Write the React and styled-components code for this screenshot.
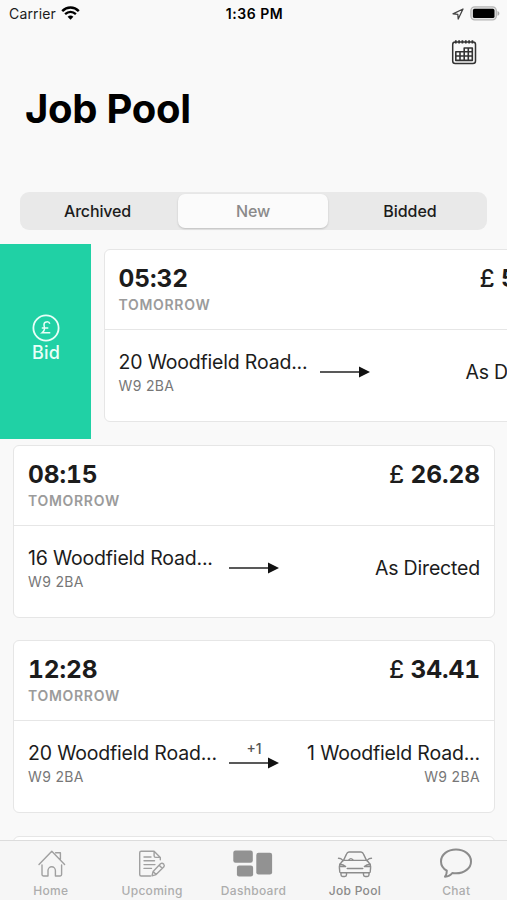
import React from "react";
import styled, { createGlobalStyle } from "styled-components";

const GlobalStyle = createGlobalStyle`
  * {
    box-sizing: border-box;
  }

  body {
    margin: 0;
    background: #f9f9f9;
    font-family: Inter, "Liberation Sans", sans-serif;
    color: #1c1c1c;
  }
`;

const Screen = styled.div`
  display: flex;
  flex-direction: column;
  width: 507px;
  height: 900px;
  overflow: hidden;
  background: #f9f9f9;
`;

const StatusBar = styled.div`
  display: grid;
  grid-template-columns: 1fr auto 1fr;
  align-items: center;
  height: 27px;
  padding: 0 7px 0 9px;
  flex-shrink: 0;
`;

const Carrier = styled.div`
  display: flex;
  align-items: center;
  gap: 5px;
  margin-top: -1px;
  font-size: 14px;
  line-height: 17px;
  letter-spacing: 0.15px;
`;

const Clock = styled.div`
  font-size: 14px;
  line-height: 17px;
  font-weight: 600;
  letter-spacing: 0.55px;
  color: #000;
`;

const StatusIcons = styled.div`
  display: flex;
  align-items: center;
  justify-content: flex-end;
  gap: 6px;
`;

const Header = styled.header`
  display: flex;
  flex-direction: column;
  height: 165px;
  padding: 12px 30px 0 25px;
  flex-shrink: 0;
`;

const CalendarButton = styled.button`
  align-self: flex-end;
  width: 26px;
  height: 26px;
  padding: 0;
  border: 0;
  background: none;

  svg {
    display: block;
  }
`;

const Title = styled.h1`
  margin: 20px 0 0;
  font-size: 40px;
  line-height: 48px;
  font-weight: 700;
  letter-spacing: -0.3px;
  color: #000;
`;

const Segments = styled.div`
  display: grid;
  grid-template-columns: 157px 152px 1fr;
  height: 38px;
  margin: 0 20px 14px;
  border-radius: 9px;
  background: #e9e9e9;
  flex-shrink: 0;
`;

const Segment = styled.button`
  margin: ${({ $active }) => ($active ? "2px 1px" : "0")};
  padding: 0;
  border: 0;
  border-radius: 7px;
  font: 500 16px/34px Inter, sans-serif;
  letter-spacing: -0.15px;
  color: ${({ $active }) => ($active ? "#8a8a8a" : "#1c1c1c")};
  background: ${({ $active }) => ($active ? "#fbfbfb" : "none")};
  box-shadow: ${({ $active }) =>
    $active ? "0 1px 2px rgba(0, 0, 0, 0.18)" : "none"};

  &:first-child {
    padding-right: 2px;
  }

  &:last-child {
    padding-left: 4px;
    letter-spacing: -0.05px;
  }
`;

const JobList = styled.main`
  flex: 1;
  min-height: 0;
  overflow: hidden;
`;

const JobRow = styled.div`
  display: flex;
  height: 195.5px;
`;

const BidAction = styled.button`
  display: flex;
  flex-direction: column;
  align-items: center;
  justify-content: center;
  width: 91px;
  height: 195px;
  margin-right: -0.5px;
  padding: 0 0 5px 1px;
  border: 0;
  flex-shrink: 0;
  font: 500 18px/22px Inter, sans-serif;
  letter-spacing: 0.2px;
  color: #e9fff8;
  background: #20d1a5;
`;

const Card = styled.article`
  width: 482px;
  height: 173px;
  margin: 5px 13px 0;
  flex-shrink: 0;
  border: 1px solid #e6e6e6;
  border-radius: 6px;
  background: #fff;
`;

const CardTop = styled.div`
  display: flex;
  justify-content: space-between;
  height: 80px;
  padding: 13px 14px 0;
  border-bottom: 1px solid #e6e6e6;
`;

const Time = styled.div`
  font-size: 24.5px;
  line-height: 30px;
  font-weight: 650;
  letter-spacing: -0.1px;
  font-variant-numeric: tabular-nums;
`;

const Day = styled.div`
  margin-top: 3px;
  font-size: 14px;
  line-height: 18px;
  font-weight: 600;
  letter-spacing: 0.7px;
  color: #9b9b9b;
`;

const Currency = styled.span`
  font-weight: 500;
`;

const Route = styled.div`
  display: grid;
  grid-template-columns: 1fr 50px 1fr;
  height: 86px;
  padding: 0 14px;
`;

const Stop = styled.div`
  padding-top: ${({ $single }) => ($single ? "30px" : "20px")};
  text-align: ${({ $end }) => ($end ? "right" : "left")};
`;

const Address = styled.div`
  font-size: 19.5px;
  line-height: 25px;
  font-weight: 440;
  letter-spacing: -0.18px;
  white-space: nowrap;
`;

const Postcode = styled.div`
  font-size: 14px;
  line-height: 22px;
  letter-spacing: 0.35px;
  color: #777;
`;

const Leg = styled.div`
  padding-top: 18px;
  text-align: center;

  svg {
    display: block;
  }
`;

const ExtraStops = styled.div`
  height: 18px;
  font-size: 14px;
  line-height: 20px;
  font-weight: 500;
  color: #555;
`;

const TabBar = styled.nav`
  display: grid;
  grid-template-columns: repeat(5, 1fr);
  height: 60px;
  border-top: 1px solid #dcdcdc;
  background: #f6f6f6;
  flex-shrink: 0;
`;

const Tab = styled.button`
  display: flex;
  flex-direction: column;
  align-items: center;
  padding: 5px 0 0;
  border: 0;
  background: none;
  font: 500 12px/16px Inter, sans-serif;
  letter-spacing: 0.3px;
  color: ${({ $active }) => ($active ? "#8a8a8a" : "#adadad")};

  svg {
    display: block;
    margin-bottom: 3px;
    fill: none;
    stroke: ${({ $dark }) => ($dark ? "#8c8c8c" : "#a0a0a0")};
    stroke-width: 1.4;
    stroke-linecap: round;
    stroke-linejoin: round;
  }
`;

const WifiIcon = () => (
  <svg width="19" height="14" viewBox="0 0 19 14" fill="none" stroke="#000">
    <path d="M1.2 5.1C6 .4 13 .4 17.8 5.1" strokeWidth="2.5" />
    <path d="M4.1 8.2c3.2-3 7.6-3 10.8 0" strokeWidth="2.3" />
    <path d="M6.6 10.8c1.8-1.6 4-1.6 5.8 0L9.5 13.7Z" fill="#000" stroke="none" />
  </svg>
);

const LocationIcon = () => (
  <svg width="12" height="12" viewBox="0 0 12 12" fill="none" stroke="#444">
    <path d="M11 1 1 5.8l4.8.5.4 4.7Z" strokeWidth="1.3" strokeLinejoin="round" />
  </svg>
);

const BatteryIcon = () => (
  <svg width="30" height="15" viewBox="0 0 30 15">
    <rect x=".9" y=".9" width="25.4" height="12.9" rx="3.8" fill="#e5e5e5" stroke="#b5b5b5" strokeWidth="1.3" />
    <rect x="2.9" y="2.8" width="21.6" height="9.2" rx="1.6" fill="#000" />
    <path d="M27.5 5c2.5.8 2.5 4 0 4.8Z" fill="#aaa" />
  </svg>
);

const CalendarIcon = () => (
  <svg width="26" height="26" viewBox="0 0 26 26" fill="none" stroke="#333">
    <rect x="1.7" y="3" width="22.8" height="21.6" rx="2.5" strokeWidth="1.5" />
    <path d="M4.8 1.2v3.4M8.1 1.2v3.4M11.4 1.2v3.4M14.8 1.2v3.4M18.1 1.2v3.4M21.4 1.2v3.4" strokeWidth="1.7" />
    <path
      d="M4.8 12.8h8.4V9h8.1v12.4H4.8ZM4.8 17h16.5M13.2 12.8h8.1M9 12.8v8.6M13.2 12.8v8.6M17.3 9v12.4"
      strokeWidth="1.6"
      strokeLinejoin="round"
    />
  </svg>
);

const PoundIcon = () => (
  <svg width="28" height="28" viewBox="0 0 28 28" fill="none" stroke="currentColor">
    <circle cx="14" cy="14" r="12.6" strokeWidth="1.8" />
    <path d="M17.8 9.8c-.7-2.8-6-2.6-5.8.9.1 2 .9 3.2.3 5-.3 1.2-1.1 2.2-2.2 3.1h8.2M9.8 14.1h6.5" strokeWidth="1.5" />
  </svg>
);

const Arrow = () => (
  <svg width="50" height="12" viewBox="0 0 50 12">
    <path d="M0 6h40" stroke="#222" strokeWidth="1.3" />
    <path d="M39 .5 50 6 39 11.5Z" fill="#111" />
  </svg>
);

const HomeIcon = () => (
  <svg width="34" height="34" viewBox="0 0 34 34">
    <path d="M5 18.6 17.8 5.2 30.6 18.6M21.600 6.8h4.800v6.100M8 18.9v9.7q0 1.4 1.4 1.4H14v-5.500a3.700 3.700 0 0 1 7.400 0V30h4.800q1.400 0 1.400-1.400v-9.700" />
  </svg>
);

const UpcomingIcon = () => (
  <svg width="34" height="34" viewBox="0 0 34 34">
    <path d="M15.5 30H6.2q-1.5 0-1.5-1.5V6.7q0-1.5 1.5-1.5h12.9l6.2 6.2v2.3M19.1 5.2v4.6q0 1.6 1.6 1.6h4.6M9 11h7M9 14.8h10.5M9 18.6h11M9 22.4h7.5" />
    <path d="m17 29.8 1.1-4.4 7.4-7.6q1.6-1.2 3.2.3 1.2 1.5 0 3l-7.6 7.5ZM18.1 25.4l3 3.2M24.2 19.3l3 3" />
  </svg>
);

const DashboardIcon = () => (
  <svg width="40" height="34" viewBox="0 0 40 34">
    <g fill="#929292" stroke="none">
      <rect x=".3" y="4.5" width="19.5" height="12.3" rx="2.2" />
      <rect x="3.900" y="19.500" width="16.200" height="11" rx="2.200" />
      <rect x="23.300" y="6.700" width="15.800" height="21.800" rx="2.200" />
    </g>
  </svg>
);

const CarIcon = () => (
  <svg width="36" height="34" viewBox="0 0 36 34">
    <path d="m6.5 14.4 3-6.3Q10.3 6 12 6h12q1.7 0 2.5 2.1l3 6.3M1.5 12.2q2.6 0 3.8 1.6M34.5 12.2q-2.6 0-3.8 1.6M6.5 14.4h23q4.3 3.2 4.1 7.5l-.4 4q-.1.8-1 .8H3.8q-.9 0-1-.8l-.4-4q-.2-4.3 4.1-7.5Z" />
    <path d="M11.7 14.2q2.2-3.2 4.4 0M2.6 18.2q4 0 6 2.3H2.7M33.4 18.2q-4 0-6 2.3h5.9M10.2 22.5h15.6M4 26.8v2q0 1.7 1.7 1.7h2.1q1.7 0 1.7-1.7v-2M26.5 26.8v2q0 1.7 1.7 1.7h2.1q1.7 0 1.7-1.7v-2" />
  </svg>
);

const ChatIcon = () => (
  <svg width="34" height="34" viewBox="0 0 34 34">
    <path
      d="M17 3.5c-8.4 0-15 5.1-15 11.9 0 4 2.3 7.2 5.8 9.3.1 2.4-.5 4.2-1.8 6 3.2-.2 5.6-1.4 7.3-3.7 1.2.2 2.4.3 3.7.3 8.4 0 15-5.1 15-11.9S25.4 3.500 17 3.500Z"
      strokeWidth="2"
    />
  </svg>
);

const jobs = [
  {
    time: "05:32",
    price: "52.40",
    from: "20 Woodfield Road...",
    bidOpen: true,
  },
  { time: "08:15", price: "26.28", from: "16 Woodfield Road..." },
  {
    time: "12:28",
    price: "34.41",
    from: "20 Woodfield Road...",
    to: "1 Woodfield Road...",
    extra: "+1",
  },
];

const tabs = [
  { label: "Home", icon: <HomeIcon /> },
  { label: "Upcoming", icon: <UpcomingIcon /> },
  { label: "Dashboard", icon: <DashboardIcon /> },
  { label: "Job Pool", icon: <CarIcon />, active: true },
  { label: "Chat", icon: <ChatIcon />, dark: true },
];

const JobCard = ({ job }) => (
  <Card>
    <CardTop>
      <div>
        <Time>{job.time}</Time>
        <Day>TOMORROW</Day>
      </div>
      <Time as="strong">
        <Currency>£</Currency> {job.price}
      </Time>
    </CardTop>
    <Route>
      <Stop>
        <Address>{job.from}</Address>
        <Postcode>W9 2BA</Postcode>
      </Stop>
      <Leg>
        <ExtraStops>{job.extra}</ExtraStops>
        <Arrow />
      </Leg>
      <Stop $end $single={!job.to}>
        <Address>{job.to || "As Directed"}</Address>
        {job.to && <Postcode>W9 2BA</Postcode>}
      </Stop>
    </Route>
  </Card>
);

const App = () => {
  return (
    <Screen>
      <GlobalStyle />
      <StatusBar>
        <Carrier>
          Carrier
          <WifiIcon />
        </Carrier>
        <Clock>1:36 PM</Clock>
        <StatusIcons>
          <LocationIcon />
          <BatteryIcon />
        </StatusIcons>
      </StatusBar>

      <Header>
        <CalendarButton aria-label="Calendar">
          <CalendarIcon />
        </CalendarButton>
        <Title>Job Pool</Title>
      </Header>

      <Segments>
        <Segment>Archived</Segment>
        <Segment $active>New</Segment>
        <Segment>Bidded</Segment>
      </Segments>

      <JobList>
        {jobs.map((job) => (
          <JobRow key={job.time}>
            {job.bidOpen && (
              <BidAction>
                <PoundIcon />
                Bid
              </BidAction>
            )}
            <JobCard job={job} />
          </JobRow>
        ))}
        {/* only the top edge of the next card shows above the tab bar */}
        <JobRow>
          <Card />
        </JobRow>
      </JobList>

      <TabBar>
        {tabs.map((tab) => (
          <Tab key={tab.label} $active={tab.active} $dark={tab.dark || tab.active}>
            {tab.icon}
            {tab.label}
          </Tab>
        ))}
      </TabBar>
    </Screen>
  );
};

export default App;
